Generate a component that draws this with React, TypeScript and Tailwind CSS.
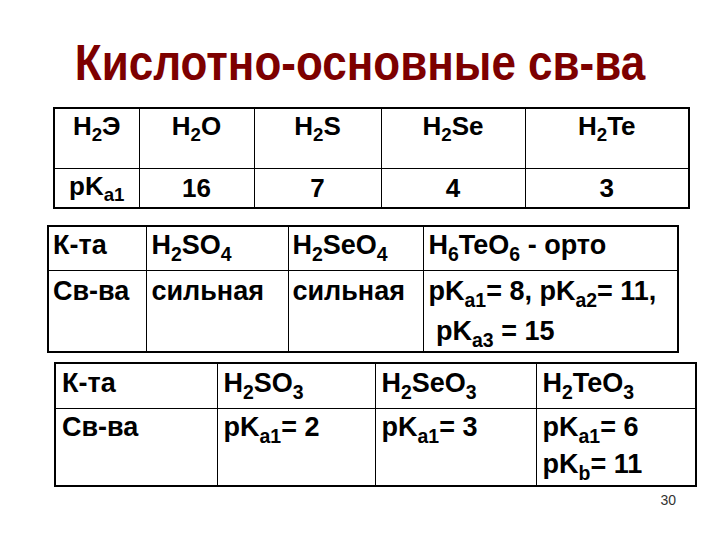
import type { ReactNode } from 'react'

const Sub = ({ children }: { children: ReactNode }) => (
  <span className="text-[0.72em] align-[-0.34em] leading-none">{children}</span>
)

const cell = 'border border-black'

export default function App() {
  return (
    <div className="w-[720px] h-[540px] bg-white text-black overflow-hidden" style={{ fontFamily: '"Liberation Sans", Arial, sans-serif' }}>
      {/* title */}
      <div className="h-[107px] pt-[19px] flex items-center justify-center">
        <h1 className="text-[44px] leading-none font-bold text-[#7d0000] scale-y-[1.12]">Кислотно-основные св-ва</h1>
      </div>

      {/* hydrides */}
      <table className="ml-[53px] w-[635px] table-fixed border-collapse border-2 border-black text-[26px] font-bold text-center">
        <colgroup>
          <col className="w-[85px]" />
          <col className="w-[115px]" />
          <col className="w-[127px]" />
          <col className="w-[144px]" />
          <col className="w-[164px]" />
        </colgroup>
        <tbody>
          <tr className="h-[60px] leading-[30px]">
            <td className={`${cell} align-top pt-[2px]`}>H<Sub>2</Sub>Э</td>
            <td className={`${cell} align-top pt-[2px]`}>H<Sub>2</Sub>O</td>
            <td className={`${cell} align-top pt-[2px]`}>H<Sub>2</Sub>S</td>
            <td className={`${cell} align-top pt-[2px]`}>H<Sub>2</Sub>Se</td>
            <td className={`${cell} align-top pt-[2px]`}>H<Sub>2</Sub>Te</td>
          </tr>
          <tr className="h-[40px] leading-[30px]">
            <td className={cell}>pK<Sub>a1</Sub></td>
            <td className={cell}>16</td>
            <td className={cell}>7</td>
            <td className={cell}>4</td>
            <td className={cell}>3</td>
          </tr>
        </tbody>
      </table>

      {/* high-valent acids */}
      <table className="mt-[16px] ml-[47px] w-[630px] table-fixed border-collapse border-2 border-black text-[27px] font-bold text-left">
        <colgroup>
          <col className="w-[98px]" />
          <col className="w-[142px]" />
          <col className="w-[135px]" />
          <col className="w-[255px]" />
        </colgroup>
        <tbody>
          <tr className="h-[44px] leading-[30px]">
            <td className={`${cell} align-top pt-[3px] pl-[4px]`}>К-та</td>
            <td className={`${cell} align-top pt-[3px] pl-[5px]`}>H<Sub>2</Sub>SO<Sub>4</Sub></td>
            <td className={`${cell} align-top pt-[3px] pl-[4px]`}>H<Sub>2</Sub>SeO<Sub>4</Sub></td>
            <td className={`${cell} align-top pt-[3px] pl-[5px]`}>H<Sub>6</Sub>TeO<Sub>6</Sub> - орто</td>
          </tr>
          <tr className="h-[78px] leading-[40px]">
            <td className={`${cell} align-top pl-[4px]`}>Св-ва</td>
            <td className={`${cell} align-top pl-[5px]`}>сильная</td>
            <td className={`${cell} align-top pl-[4px]`}>сильная</td>
            <td className={`${cell} align-top pl-[5px]`}>
              pK<Sub>a1</Sub>= 8, pK<Sub>a2</Sub>= 11,
              <br />
              &nbsp;pK<Sub>a3</Sub> = 15
            </td>
          </tr>
        </tbody>
      </table>

      {/* low-valent acids */}
      <table className="mt-[9px] ml-[54px] w-[641px] table-fixed border-collapse border-2 border-black text-[27px] font-bold text-left">
        <colgroup>
          <col className="w-[162px]" />
          <col className="w-[158px]" />
          <col className="w-[161px]" />
          <col className="w-[160px]" />
        </colgroup>
        <tbody>
          <tr className="h-[46px] leading-[30px]">
            <td className={`${cell} align-top pt-[4px] pl-[6px]`}>К-та</td>
            <td className={`${cell} align-top pt-[4px] pl-[6px]`}>H<Sub>2</Sub>SO<Sub>3</Sub></td>
            <td className={`${cell} align-top pt-[4px] pl-[6px]`}>H<Sub>2</Sub>SeO<Sub>3</Sub></td>
            <td className={`${cell} align-top pt-[4px] pl-[6px]`}>H<Sub>2</Sub>TeO<Sub>3</Sub></td>
          </tr>
          <tr className="h-[77px] leading-[37px]">
            <td className={`${cell} align-top pl-[6px]`}>Св-ва</td>
            <td className={`${cell} align-top pl-[6px]`}>pK<Sub>a1</Sub>= 2</td>
            <td className={`${cell} align-top pl-[6px]`}>pK<Sub>a1</Sub>= 3</td>
            <td className={`${cell} align-top pl-[6px]`}>
              pK<Sub>a1</Sub>= 6
              <br />
              pK<Sub>b</Sub>= 11
            </td>
          </tr>
        </tbody>
      </table>

      <div className="w-[676px] mt-[3px] text-right text-[14px] leading-[20px] text-[#333]">30</div>
    </div>
  )
}
